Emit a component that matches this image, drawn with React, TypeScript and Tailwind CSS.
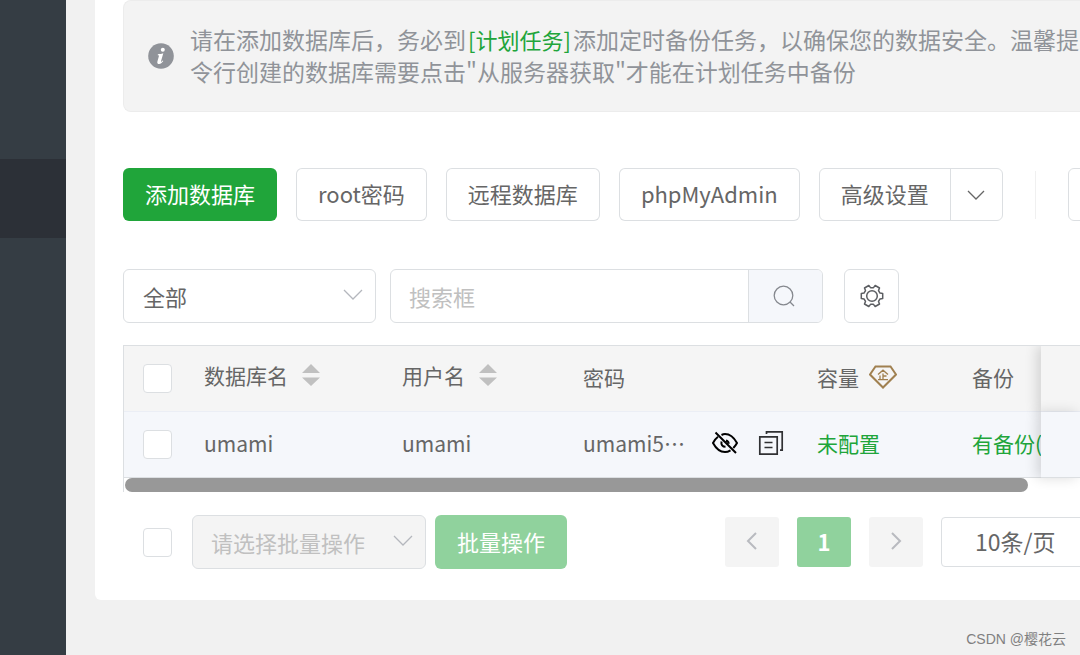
import { useState } from 'react'
import type { ReactNode } from 'react'
import { clsx } from 'clsx'

const borderColor = 'border-[#dcdfe2]'

function Chevron({ className, d, width = 1 }: { className?: string; d: string; width?: number }) {
  return (
    <svg viewBox="0 0 20 20" className={className} fill="none" stroke="currentColor" strokeWidth={width} aria-hidden="true">
      <path d={d} />
    </svg>
  )
}

function ToolButton({ children, primary }: { children: ReactNode; primary?: boolean }) {
  return (
    <button
      type="button"
      className={clsx(
        'h-[53px] shrink-0 rounded-md px-[22px] pb-1 whitespace-nowrap',
        primary ? 'bg-[#20a53a] text-white' : 'bg-white shadow-[inset_0_0_0_1px_#dcdfe2]',
      )}
    >
      {children}
    </button>
  )
}

function CheckBox({ label }: { label: string }) {
  return (
    <input
      type="checkbox"
      aria-label={label}
      className={clsx('block size-[29px] shrink-0 appearance-none rounded border bg-white checked:bg-[#20a53a]', borderColor)}
    />
  )
}

function SortIcon() {
  return (
    <svg viewBox="0 0 18 24" className="h-6 w-[18px]" fill="#c0c0c0" aria-hidden="true">
      <path d="M9 1 18 10H0zM9 23 18 14.500H0z" />
    </svg>
  )
}

function InfoIcon() {
  return (
    <svg viewBox="0 0 26 26" className="size-[26px] shrink-0" aria-hidden="true">
      <circle cx="13" cy="13" r="12.800" fill="#909399" />
      <circle cx="14.800" cy="6.800" r="2" fill="#fff" />
      <path d="M9.900 11.200c1.900 0 3.300-.3 5.400-.9l-2.300 8c-.3 1 .3.900 1.700-.7l.6.500c-1.500 2.100-2.700 2.900-4.200 2.900-1.600 0-2.100-1.100-1.700-2.600l1.400-4.800c.3-1 .1-1.400-1.100-1.400z" fill="#fff" />
    </svg>
  )
}

function SearchIcon() {
  return (
    <svg viewBox="0 0 22 22" className="size-[22px]" fill="none" stroke="#85888e" strokeWidth="1.300" aria-hidden="true">
      <circle cx="10.500" cy="10.500" r="9.300" />
      <path d="m17 17 4 4" />
    </svg>
  )
}

function GearIcon() {
  return (
    <svg viewBox="0 0 24 24" className="size-6" fill="none" stroke="#5c5e62" strokeWidth="1.500" strokeLinejoin="round" aria-hidden="true">
      <path d="M19.990 9.090 22.700 9.500v5l-2.710.410-1.470 2.550 1 2.560-4.330 2.500-1.720-2.150h-2.940l-1.720 2.150-4.330-2.500 1-2.560-1.470-2.550L1.300 14.500v-5l2.710-.410 1.470-2.550-1-2.560 4.330-2.500 1.720 2.150h2.940l1.720-2.150 4.330 2.500-1 2.560z" />
      <circle cx="12" cy="12" r="5.300" />
    </svg>
  )
}

function EyeOffIcon() {
  return (
    <svg viewBox="0 0 26 24" className="h-6 w-[26px]" fill="none" stroke="#000" strokeWidth="2" aria-hidden="true">
      <path d="M9.500 4C10.600 3.400 11.800 3 13 3c5 0 9 3.500 12 9-1 1.900-2.300 3.600-3.700 5M18.500 19.300C16.700 20.400 15 21 13 21c-5 0-9-3.500-12-9 1.300-2.500 3-4.700 5-6.200" />
      <path d="M14 9.500c1.600.4 2.600 1.500 2.700 3.200M9.500 10.500c-.6 3.200 1 5.300 4 5.300M3.500 1.500l20.500 20.500" />
    </svg>
  )
}

function CopyIcon() {
  return (
    <svg viewBox="0 0 26 26" className="size-[26px]" fill="none" stroke="#303133" strokeWidth="1.700" aria-hidden="true">
      <path d="M1.800 6.800h17.400v17.400H1.800zM8.500 4V1.800h15.700v18.400H22M6.500 12.500h8M6.500 17.500h8" />
    </svg>
  )
}

function EnterpriseIcon() {
  return (
    <svg viewBox="0 0 28 24" className="h-6 w-7" fill="none" stroke="#a08050" strokeWidth="2" aria-hidden="true">
      <path d="M6.500 1.500h15L27 9.500 14 22.500 1 9.500z" />
      <path d="m9 9.500 5-4.300 5 4.300M14 8.500v6M14 11h3.500M11 10.500v4M9 14.700h10" strokeWidth="1.300" />
    </svg>
  )
}

const headCell = 'h-[66px] border-b border-[#ebeef5] bg-[#f5f5f5] px-[15px] text-left font-normal whitespace-nowrap'
const bodyCell = 'h-[66px] border-b border-[#dcdfe2] bg-[#f5f7fb] px-[15px] whitespace-nowrap'
const fixedCell = 'sticky right-0 z-10 shadow-[-4px_0_12px_rgba(0,0,0,0.14)]'

function DatabaseTable() {
  return (
    <div className="overflow-hidden border-t border-l border-[#dcdfe2]">
      <table className="w-[1160px] table-fixed border-separate border-spacing-0 text-[21px]">
        <colgroup>
          <col className="w-[65px]" />
          <col className="w-[198px]" />
          <col className="w-[181px]" />
          <col className="w-[234px]" />
          <col className="w-[155px]" />
          <col />
          <col className="w-[39px]" />
        </colgroup>
        <thead>
          <tr>
            <th className={clsx(headCell, 'pl-[19px]')}><CheckBox label="全选" /></th>
            <th className={clsx(headCell, 'pb-2')}>
              <span className="flex items-center gap-[14px]">数据库名<SortIcon /></span>
            </th>
            <th className={clsx(headCell, 'pb-2')}>
              <span className="flex items-center gap-[14px]">用户名<SortIcon /></span>
            </th>
            <th className={clsx(headCell, 'pb-1')}>密码</th>
            <th className={clsx(headCell, 'pb-1')}>
              <span className="flex items-center gap-[10px]">容量<EnterpriseIcon /></span>
            </th>
            <th className={clsx(headCell, 'pb-1')}>备份</th>
            <th className={clsx(headCell, fixedCell)} />
          </tr>
        </thead>
        <tbody>
          <tr>
            <td className={clsx(bodyCell, 'pl-[19px]')}><CheckBox label="umami" /></td>
            <td className={clsx(bodyCell, 'pb-1')}>umami</td>
            <td className={clsx(bodyCell, 'pb-1')}>umami</td>
            <td className={clsx(bodyCell, 'pb-1')}>
              <div className="flex items-center gap-5">
                <span className="w-[109px]">umami5…</span>
                <button type="button" aria-label="显示密码"><EyeOffIcon /></button>
                <button type="button" aria-label="复制密码"><CopyIcon /></button>
              </div>
            </td>
            <td className={clsx(bodyCell, 'pb-1')}><a href="#quota" className="text-[#20a53a]">未配置</a></td>
            <td className={clsx(bodyCell, 'pb-1')}><a href="#backup" className="text-[#20a53a]">有备份(1)</a></td>
            <td className={clsx(bodyCell, fixedCell)} />
          </tr>
        </tbody>
      </table>
      <div className="h-[14px] pl-px">
        <div className="mr-[52px] h-full rounded-full bg-[#989898]" />
      </div>
    </div>
  )
}

function Pager() {
  const item = 'flex h-[50px] w-[54px] items-center justify-center rounded-[3px] pb-[2px]'
  return (
    <nav className="flex shrink-0 gap-[18px]">
      <button type="button" aria-label="上一页" disabled className={clsx(item, 'bg-[#f4f4f4] text-[#b8babf]')}>
        <Chevron className="size-5" d="M14 2 6 10l8 8" width={2} />
      </button>
      <button type="button" className={clsx(item, 'bg-[#90d29d] font-bold text-white')}>1</button>
      <button type="button" aria-label="下一页" disabled className={clsx(item, 'bg-[#f4f4f4] text-[#b8babf]')}>
        <Chevron className="size-5" d="m6 2 8 8-8 8" width={2} />
      </button>
      <select aria-label="每页条数" className={clsx('h-[50px] w-[190px] appearance-none rounded border bg-white px-[33px] pb-[2px] text-[23px]', borderColor)}>
        <option>10条/页</option>
        <option>20条/页</option>
      </select>
    </nav>
  )
}

export default function App() {
  const [keyword, setKeyword] = useState('')

  return (
    <div
      lang="zh-CN"
      className="relative flex min-h-screen overflow-hidden bg-[#f1f1f1] font-['Noto_Sans_CJK_SC',sans-serif] text-[22px] leading-8 text-[#666]"
    >
      <aside className="w-[66px] shrink-0 bg-[#353d44] pt-[159px]">
        <a href="#database" aria-label="数据库" className="block h-[79px] bg-[#2c3037]" />
      </aside>

      <main className="min-w-0 flex-1 pb-[55px] pl-[29px]">
        <div className="rounded-bl-md bg-white pb-[31px] pl-7">
          <div className="flex h-28 items-center gap-4 overflow-hidden rounded-l-lg border border-r-0 border-[#ececec] bg-[#f3f3f3] pl-6 text-[23px] leading-8 whitespace-nowrap text-[#909399]">
            <InfoIcon />
            <p className="pb-[2px]">
              请在添加数据库后，务必到
              <a href="#crontab" className="mx-[2px] text-[22px] text-[#20a53a]">[计划任务]</a>
              添加定时备份任务，以确保您的数据安全。温馨提
              <br />
              令行创建的数据库需要点击"从服务器获取"才能在计划任务中备份
            </p>
          </div>

          <div className="mt-14 flex items-center gap-[19px] overflow-hidden">
            <ToolButton primary>添加数据库</ToolButton>
            <ToolButton>root密码</ToolButton>
            <ToolButton>远程数据库</ToolButton>
            <ToolButton>phpMyAdmin</ToolButton>
            <div className={clsx('flex h-[53px] shrink-0 rounded-md border', borderColor)}>
              <button type="button" className="px-[21px] pb-1">高级设置</button>
              <button type="button" aria-label="更多设置" className={clsx('flex w-[52px] items-center justify-center border-l', borderColor)}>
                <Chevron className="size-5" d="m2 6 8 8 8-8" width={1.3} />
              </button>
            </div>
            <div className="mx-[13px] h-12 w-px shrink-0 bg-[#f0f0f0]" />
            <button type="button" aria-label="更多" className={clsx('h-[53px] w-20 shrink-0 rounded-md border', borderColor)} />
          </div>

          <div className="mt-12 flex items-center">
            <div className="relative">
              <select aria-label="分类" className={clsx('block h-[54px] w-[253px] appearance-none rounded-md border bg-white px-[19px]', borderColor)}>
                <option>全部</option>
              </select>
              <Chevron className="pointer-events-none absolute top-4 right-[13px] size-5 text-[#b4b7bd]" d="m1 5 9 9 9-9" width={1.3} />
            </div>
            <div className={clsx('ml-[14px] flex h-[54px] w-[433px] overflow-hidden rounded-md border', borderColor)}>
              <input
                aria-label="搜索框"
                placeholder="搜索框"
                value={keyword}
                onChange={(e) => setKeyword(e.target.value)}
                className="min-w-0 flex-1 px-[18px] outline-none placeholder:text-[#c0c0c0]"
              />
              <button type="button" aria-label="搜索" className={clsx('flex w-[74px] items-center justify-center border-l bg-[#f5f7fb] pr-1', borderColor)}>
                <SearchIcon />
              </button>
            </div>
            <button type="button" aria-label="设置" className={clsx('ml-[21px] flex h-[54px] w-[55px] items-center justify-center rounded-md border', borderColor)}>
              <GearIcon />
            </button>
          </div>

          <div className="mt-[22px]">
            <DatabaseTable />
          </div>

          <div className="mt-[23px] flex items-center overflow-hidden pl-5">
            <CheckBox label="全选当前页" />
            <div className="relative ml-5">
              <select
                aria-label="批量操作"
                disabled
                className={clsx('block h-[54px] w-[234px] appearance-none rounded-md border bg-[#f4f4f4] px-[18px] text-[#c0c0c0] opacity-100', borderColor)}
              >
                <option>请选择批量操作</option>
              </select>
              <Chevron className="pointer-events-none absolute top-4 right-[13px] size-5 text-[#b4b7bd]" d="m1 5 9 9 9-9" width={1.3} />
            </div>
            <button type="button" disabled className="ml-[9px] h-[54px] shrink-0 rounded-md bg-[#90d29d] px-[22px] pb-[2px] text-white">批量操作</button>
            <div className="ml-[158px]">
              <Pager />
            </div>
          </div>
        </div>
      </main>

      <div className="absolute right-[14px] bottom-1 font-['Liberation_Sans','Noto_Sans_CJK_SC',sans-serif] text-[14px] leading-6 text-[#808080]">
        CSDN @樱花云
      </div>
    </div>
  )
}
